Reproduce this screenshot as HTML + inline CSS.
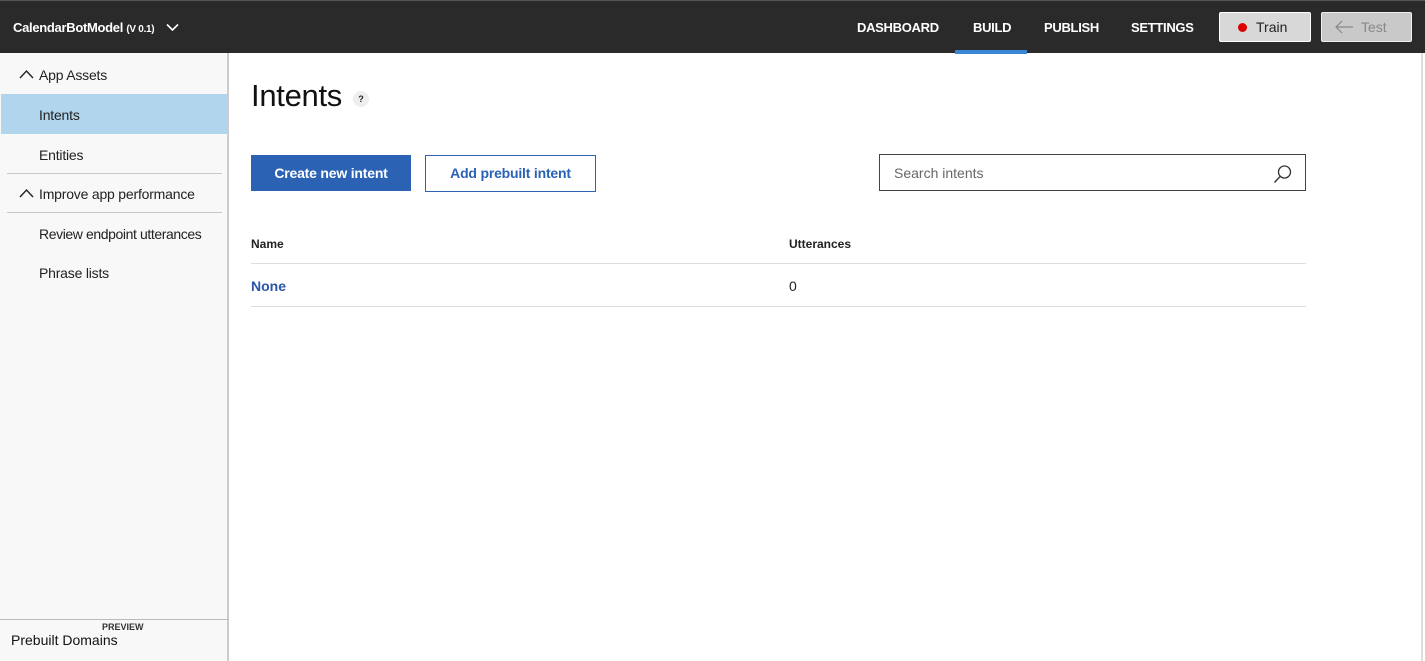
<!DOCTYPE html>
<html><head><style>
*{margin:0;padding:0;box-sizing:border-box}
body{width:1425px;height:661px;overflow:hidden;background:#fff;font-family:"Liberation Sans",sans-serif;position:relative;color:#222}
.top{position:absolute;left:0;top:0;width:1425px;height:53px;background:#2a2a2a;border-top:1px solid #555}
.abs{position:absolute;white-space:nowrap}
.nav{color:#fff;font-size:13px;font-weight:bold;top:20px;letter-spacing:-0.3px}
.side{position:absolute;left:0;top:53px;width:229px;height:608px;background:#f8f8f8;border-right:2px solid #ccc}
.si{position:absolute;left:39px;font-size:14px;color:#222;letter-spacing:-0.2px}
.hr{position:absolute;height:1px;background:#c8c8c8}
</style></head><body>
<div class="top"></div>
<div class="abs" style="left:13px;top:20px;color:#fff;font-size:13px;font-weight:bold;letter-spacing:-0.3px">CalendarBotModel <span style="font-size:10px">(V 0.1)</span></div>
<svg class="abs" style="left:166px;top:23px" width="13" height="9"><path d="M1 1.5L6.5 7L12 1.5" stroke="#fff" stroke-width="1.6" fill="none"/></svg>
<div class="abs nav" style="left:857px">DASHBOARD</div>
<div class="abs nav" style="left:973px">BUILD</div>
<div class="abs" style="left:955px;top:50px;width:72px;height:4px;background:#3a86d4"></div>
<div class="abs nav" style="left:1044px">PUBLISH</div>
<div class="abs nav" style="left:1131px">SETTINGS</div>
<div class="abs" style="left:1219px;top:12px;width:92px;height:30px;background:#d8d8d8;border:1px solid #fff;border-radius:2px"></div>
<div class="abs" style="left:1238px;top:23px;width:9px;height:9px;border-radius:50%;background:#d00"></div>
<div class="abs" style="left:1256px;top:19px;font-size:14px;color:#222">Train</div>
<div class="abs" style="left:1321px;top:12px;width:91px;height:30px;background:#c9c9c9;border:1px solid #eee;border-radius:2px"></div>
<svg class="abs" style="left:1334px;top:20px" width="20" height="14"><path d="M19 7H2M8 1L2 7L8 13" stroke="#888" stroke-width="1.2" fill="none"/></svg>
<div class="abs" style="left:1361px;top:19px;font-size:14px;color:#888">Test</div>

<div class="side"></div>
<svg class="abs" style="left:19px;top:69px" width="15" height="10"><path d="M1 9L7.5 2L14 9" stroke="#222" stroke-width="1.4" fill="none"/></svg>
<div class="si" style="top:67px">App Assets</div>
<div class="abs" style="left:1px;top:94px;width:227px;height:40px;background:#b0d5ec"></div>
<div class="si" style="top:107px">Intents</div>
<div class="si" style="top:147px">Entities</div>
<div class="hr" style="left:7px;top:173px;width:215px"></div>
<svg class="abs" style="left:19px;top:188px" width="15" height="10"><path d="M1 9L7.5 2L14 9" stroke="#222" stroke-width="1.4" fill="none"/></svg>
<div class="si" style="top:186px">Improve app performance</div>
<div class="hr" style="left:7px;top:212px;width:215px"></div>
<div class="si" style="top:226px;letter-spacing:-0.4px">Review endpoint utterances</div>
<div class="si" style="top:265px">Phrase lists</div>
<div class="hr" style="left:0;top:619px;width:229px;background:#bbb"></div>
<div class="abs" style="left:102px;top:622px;font-size:9px;font-weight:bold;color:#333">PREVIEW</div>
<div class="abs" style="left:11px;top:632px;font-size:14px;color:#111">Prebuilt Domains</div>

<div class="abs" style="left:251px;top:78px;font-size:31px;color:#111;letter-spacing:-0.3px">Intents</div>
<div class="abs" style="left:353px;top:91px;width:16px;height:16px;border-radius:50%;background:#eee;font-size:9px;text-align:center;line-height:16px;font-weight:bold">?</div>
<div class="abs" style="left:251px;top:155px;width:160px;height:36px;background:#2b62b4;color:#fff;font-size:14px;font-weight:bold;text-align:center;line-height:36px;letter-spacing:-0.2px">Create new intent</div>
<div class="abs" style="left:425px;top:155px;width:171px;height:37px;border:1px solid #2b62b4;color:#2b62b4;font-size:14px;font-weight:bold;text-align:center;line-height:35px;letter-spacing:-0.2px">Add prebuilt intent</div>
<div class="abs" style="left:879px;top:154px;width:427px;height:37px;border:1px solid #444"></div>
<div class="abs" style="left:894px;top:165px;font-size:14px;color:#666">Search intents</div>
<svg class="abs" style="left:1272px;top:163px" width="22" height="22"><circle cx="12.5" cy="9" r="6" stroke="#333" stroke-width="1.3" fill="none"/><path d="M8.3 13.2L2.5 19.5" stroke="#333" stroke-width="1.4"/></svg>
<div class="abs" style="left:251px;top:237px;font-size:12px;font-weight:bold">Name</div>
<div class="abs" style="left:789px;top:237px;font-size:12px;font-weight:bold">Utterances</div>
<div class="hr" style="left:251px;top:263px;width:1055px;background:#ddd"></div>
<div class="abs" style="left:251px;top:278px;font-size:14px;font-weight:bold;color:#2b55a8">None</div>
<div class="abs" style="left:789px;top:278px;font-size:14px">0</div>
<div class="hr" style="left:251px;top:306px;width:1055px;background:#ddd"></div>
<div class="abs" style="left:1421px;top:53px;width:2px;height:608px;background:#ddd"></div>
</body></html>
